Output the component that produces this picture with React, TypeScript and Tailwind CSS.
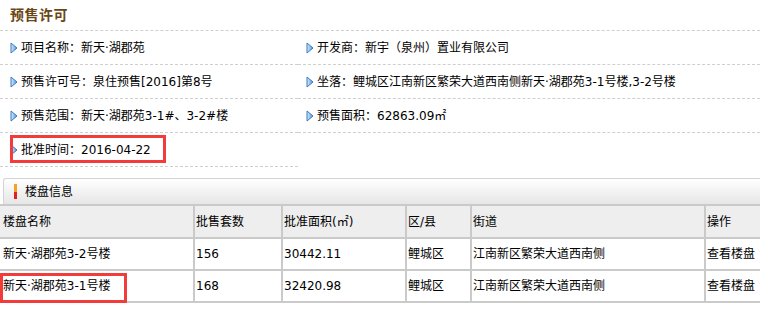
import React from 'react';

const font = { fontFamily: '"DejaVu Sans", "Noto Sans CJK SC", sans-serif' };

function Arrow() {
  return (
    <svg width="8" height="12" viewBox="0 0 8 12" className="shrink-0 mr-[3px]">
      <defs>
        <linearGradient id="ag" x1="0" y1="0" x2="1" y2="0">
          <stop offset="0" stopColor="#d6ebfd" />
          <stop offset="1" stopColor="#4f95dc" />
        </linearGradient>
      </defs>
      <path d="M1 1 L7 6 L1 11 Z" fill="url(#ag)" stroke="#3a79c0" strokeWidth="1" />
    </svg>
  );
}

const info: [string, string][] = [
  ['项目名称：', '新天·湖郡苑'],
  ['开发商：', '新宇（泉州）置业有限公司'],
  ['预售许可号：', '泉住预售[2016]第8号'],
  ['坐落：', '鲤城区江南新区繁荣大道西南侧新天·湖郡苑3-1号楼,3-2号楼'],
  ['预售范围：', '新天·湖郡苑3-1#、3-2#楼'],
  ['预售面积：', '62863.09㎡'],
  ['批准时间：', '2016-04-22'],
];

const head = ['楼盘名称', '批售套数', '批准面积(㎡)', '区/县', '街道', '操作'];
const rows = [
  ['新天·湖郡苑3-2号楼', '156', '30442.11', '鲤城区', '江南新区繁荣大道西南侧', '查看楼盘'],
  ['新天·湖郡苑3-1号楼', '168', '32420.98', '鲤城区', '江南新区繁荣大道西南侧', '查看楼盘'],
];

export default function App() {
  return (
    <div className="relative w-[760px] h-[322px] bg-white text-[12px] text-black overflow-hidden" style={font}>
      <div className="h-[31px] pl-[10px] flex items-center border-b border-dashed border-[#cfcfcf]">
        <span className="text-[14px] font-bold text-[#6a4614] tracking-[0.5px]">预售许可</span>
      </div>

      <div className="grid grid-cols-[298px_462px]">
        {info.map(([k, v], i) => (
          <div
            key={k}
            className={`h-[34px] flex items-center border-b border-dashed border-[#cfcfcf] ${
              i % 2 === 0 ? 'pl-[10px]' : 'pl-[8px]'
            }`}
          >
            <Arrow />
            <span>{k}</span>
            <span>{v}</span>
          </div>
        ))}
      </div>

      <div className="mt-[11px] ml-[3px] h-[26px] flex items-center border-t border-l border-[#d4d4d4] rounded-tl-[3px] bg-gradient-to-b from-white to-[#e6e6e6]">
        <div className="ml-[10px] w-[3px] h-[15px] flex flex-col">
          <div className="flex-1 bg-[#f2a12b]" />
          <div className="flex-1 bg-[#e0231c]" />
        </div>
        <span className="ml-[8px]">楼盘信息</span>
      </div>

      <div className="grid grid-cols-[193px_86px_122px_63px_232px_54px] gap-[2px] pt-[2px] pb-[2px] bg-[#cacaca]">
        {head.map((h, i) => (
          <div key={h} className={`h-[31px] flex items-center bg-[#eeeeee] ${i === 0 ? 'pl-[3px]' : 'pl-[1px]'}`}>
            {h}
          </div>
        ))}
        {rows.map((r) =>
          r.map((c, i) => (
            <div key={r[0] + i} className={`h-[30px] flex items-center bg-white ${i === 0 ? 'pl-[3px]' : 'pl-[1px]'}`}>
              {c}
            </div>
          ))
        )}
      </div>

      {/* red annotation boxes */}
      <div className="absolute left-[10px] top-[135px] w-[156px] h-[28px] border-[3px] border-[#f23c3c]" />
      <div className="absolute left-0 top-[273px] w-[127px] h-[30px] border-[3px] border-[#f23c3c]" />
    </div>
  );
}
